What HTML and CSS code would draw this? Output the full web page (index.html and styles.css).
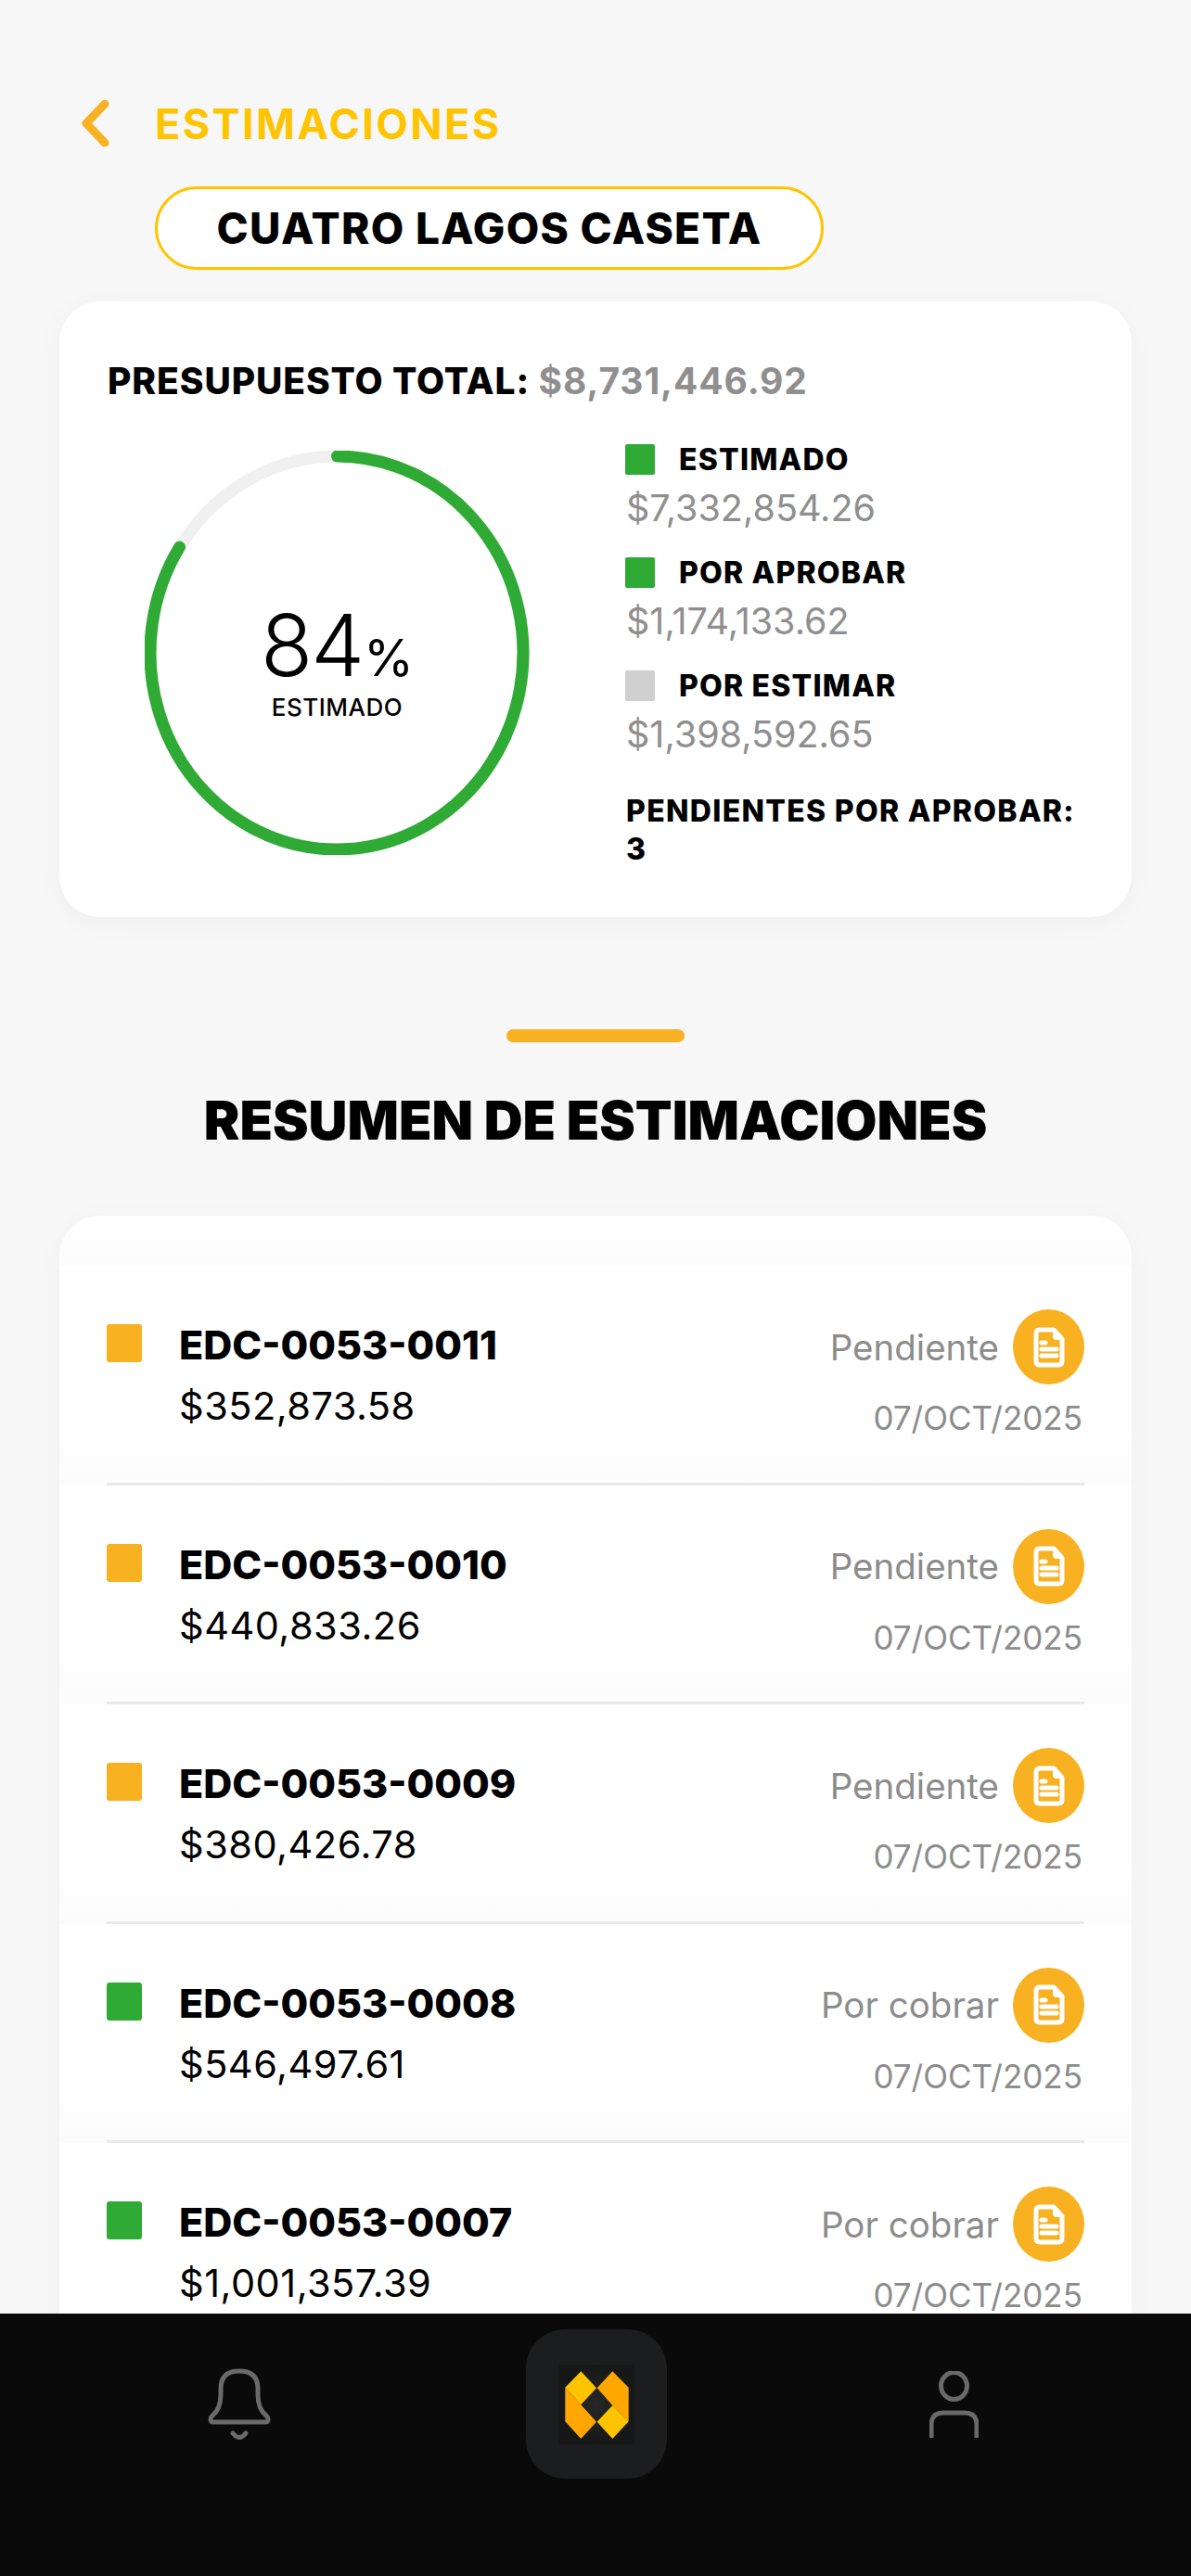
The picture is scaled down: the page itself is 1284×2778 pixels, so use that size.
FILE: index.html
```html
<!DOCTYPE html>
<html lang="es">
<head>
    <meta charset="UTF-8" />
    <meta name="viewport" content="width=device-width, initial-scale=1.0"/>
    <title>Estimaciones</title>
    <link rel="stylesheet" href="styles.css">
</head>
<body>

<div class="screen">
    <header class="top">
        <svg class="back" viewBox="0 0 30 50"><path d="M25 4 L5 25 L25 46" /></svg>
        <span class="top-title">ESTIMACIONES</span>
    </header>
    <div class="pill">CUATRO LAGOS CASETA</div>

    <section class="card budget">
        <div class="budget-total">PRESUPUESTO TOTAL: <span class="grey">$8,731,446.92</span></div>
        <div class="budget-body">
            <div class="donut">
                <svg viewBox="0 0 415 436">
                    <ellipse class="donut-track" cx="207.5" cy="218" rx="201" ry="212" />
                    <path class="donut-value" d="M207.5 6 A201 212 0 1 1 37.5 104" />
                </svg>
                <div class="donut-label">
                    <div class="donut-num">84<span class="donut-pct">%</span></div>
                    <div class="donut-sub">ESTIMADO</div>
                </div>
            </div>
            <div class="legend">
                <div class="legend-item">
                    <div class="legend-head"><i class="sq green"></i>ESTIMADO</div>
                    <div class="legend-amt">$7,332,854.26</div>
                </div>
                <div class="legend-item">
                    <div class="legend-head"><i class="sq green"></i>POR APROBAR</div>
                    <div class="legend-amt">$1,174,133.62</div>
                </div>
                <div class="legend-item">
                    <div class="legend-head"><i class="sq light"></i>POR ESTIMAR</div>
                    <div class="legend-amt">$1,398,592.65</div>
                </div>
                <div class="legend-pending">PENDIENTES POR APROBAR:<br>3</div>
            </div>
        </div>
    </section>

    <div class="divider-bar"></div>
    <h2 class="section-title">RESUMEN DE ESTIMACIONES</h2>

    <section class="card list">
        <div class="row">
            <div class="row-inner">
                <i class="row-sq orange"></i>
                <div class="row-main">
                    <div class="row-code">EDC-0053-0011</div>
                    <div class="row-amt">$352,873.58</div>
                </div>
                <div class="row-side">
                    <div class="row-status">Pendiente
                        <span class="doc"><svg viewBox="0 0 34 44"><path class="doc-line" d="M9 3 H22 L31 13 V37 Q31 41 27 41 H7 Q3 41 3 37 V7 Q3 3 7 3 Z" /><path class="doc-fold" d="M21 2 L32 14 H25 Q21 14 21 10 Z" /><path class="doc-line" d="M9 17 H13 M9 24 H25 M9 31 H25" /></svg></span>
                    </div>
                    <div class="row-date">07/OCT/2025</div>
                </div>
            </div>
        </div>
        <div class="row">
            <div class="row-inner">
                <i class="row-sq orange"></i>
                <div class="row-main">
                    <div class="row-code">EDC-0053-0010</div>
                    <div class="row-amt">$440,833.26</div>
                </div>
                <div class="row-side">
                    <div class="row-status">Pendiente
                        <span class="doc"><svg viewBox="0 0 34 44"><path class="doc-line" d="M9 3 H22 L31 13 V37 Q31 41 27 41 H7 Q3 41 3 37 V7 Q3 3 7 3 Z" /><path class="doc-fold" d="M21 2 L32 14 H25 Q21 14 21 10 Z" /><path class="doc-line" d="M9 17 H13 M9 24 H25 M9 31 H25" /></svg></span>
                    </div>
                    <div class="row-date">07/OCT/2025</div>
                </div>
            </div>
        </div>
        <div class="row">
            <div class="row-inner">
                <i class="row-sq orange"></i>
                <div class="row-main">
                    <div class="row-code">EDC-0053-0009</div>
                    <div class="row-amt">$380,426.78</div>
                </div>
                <div class="row-side">
                    <div class="row-status">Pendiente
                        <span class="doc"><svg viewBox="0 0 34 44"><path class="doc-line" d="M9 3 H22 L31 13 V37 Q31 41 27 41 H7 Q3 41 3 37 V7 Q3 3 7 3 Z" /><path class="doc-fold" d="M21 2 L32 14 H25 Q21 14 21 10 Z" /><path class="doc-line" d="M9 17 H13 M9 24 H25 M9 31 H25" /></svg></span>
                    </div>
                    <div class="row-date">07/OCT/2025</div>
                </div>
            </div>
        </div>
        <div class="row">
            <div class="row-inner">
                <i class="row-sq green"></i>
                <div class="row-main">
                    <div class="row-code">EDC-0053-0008</div>
                    <div class="row-amt">$546,497.61</div>
                </div>
                <div class="row-side">
                    <div class="row-status">Por cobrar
                        <span class="doc"><svg viewBox="0 0 34 44"><path class="doc-line" d="M9 3 H22 L31 13 V37 Q31 41 27 41 H7 Q3 41 3 37 V7 Q3 3 7 3 Z" /><path class="doc-fold" d="M21 2 L32 14 H25 Q21 14 21 10 Z" /><path class="doc-line" d="M9 17 H13 M9 24 H25 M9 31 H25" /></svg></span>
                    </div>
                    <div class="row-date">07/OCT/2025</div>
                </div>
            </div>
        </div>
        <div class="row">
            <div class="row-inner">
                <i class="row-sq green"></i>
                <div class="row-main">
                    <div class="row-code">EDC-0053-0007</div>
                    <div class="row-amt">$1,001,357.39</div>
                </div>
                <div class="row-side">
                    <div class="row-status">Por cobrar
                        <span class="doc"><svg viewBox="0 0 34 44"><path class="doc-line" d="M9 3 H22 L31 13 V37 Q31 41 27 41 H7 Q3 41 3 37 V7 Q3 3 7 3 Z" /><path class="doc-fold" d="M21 2 L32 14 H25 Q21 14 21 10 Z" /><path class="doc-line" d="M9 17 H13 M9 24 H25 M9 31 H25" /></svg></span>
                    </div>
                    <div class="row-date">07/OCT/2025</div>
                </div>
            </div>
        </div>
    </section>

    <nav class="tabbar">
        <svg class="tab-bell" viewBox="0 0 68 78">
            <path d="M3 55 Q3 53 5 51 Q14 44 14 28 V22 Q14 3 34 3 Q54 3 54 22 V28 Q54 44 63 51 Q65 53 65 55 Q65 58 62 58 H6 Q3 58 3 55 Z" />
            <path d="M27 70 Q34 79 41 70" />
        </svg>
        <div class="tab-logo">
            <svg viewBox="0 0 82 86">
                <defs>
                    <radialGradient id="logoBg">
                        <stop offset="0" stop-color="#262827" />
                        <stop offset="1" stop-color="#161817" />
                    </radialGradient>
                </defs>
                <rect width="82" height="86" fill="url(#logoBg)" />
                <path fill="#ffa600" d="M7.3 24.7 L24.3 43.3 L41 61.7 L24.3 80 L7.3 61.3 Z" />
                <path fill="#ffc400" d="M7.3 24.7 L24.3 7.3 L41 25.3 L24.3 43.3 Z" />
                <path fill="#ffa600" d="M41.7 25.3 L58.3 7.3 L75.7 24.7 V61.3 L58.3 44 Z" />
                <path fill="#ffc400" d="M75.7 61.3 L58.3 80 L41.7 61.7 L58.3 44 Z" />
            </svg>
        </div>
        <svg class="tab-user" viewBox="0 0 53 72">
            <ellipse cx="26.5" cy="16" rx="14" ry="14.5" />
            <path d="M2 71 V58 Q2 45 15 45 H38 Q51 45 51 58 V71" />
        </svg>
    </nav>
</div>

</body>
</html>
```

FILE: styles.css
```css
* { box-sizing: border-box; }
html, body { margin: 0; padding: 0; }
body {
    font-family: "Inter", "Liberation Sans", sans-serif;
    background: #f7f7f7;
    color: #000;
}
.screen {
    position: relative;
    width: 1284px;
    height: 2778px;
    overflow: hidden;
    padding: 106px 64px 0;
}

.top { display: flex; align-items: center; gap: 50px; height: 54px; padding-left: 24px; }
.back { width: 30px; height: 50px; fill: none; stroke: #f7b121; stroke-width: 9; stroke-linecap: round; stroke-linejoin: round; }
.top-title { color: #ffc400; font-size: 45px; font-weight: 700; letter-spacing: 2.4px; margin-left: -1px; }

.pill {
    width: 721px;
    height: 90px;
    margin: 41px 0 0 103px;
    display: flex;
    align-items: center;
    justify-content: center;
    background: #fff;
    border: 3px solid #ffc400;
    border-radius: 45px;
    font-size: 46px;
    font-weight: 800;
    letter-spacing: 1.3px;
}

.card {
    background: #fff;
    border-radius: 44px;
    box-shadow: 0 6px 30px rgba(0, 0, 0, .035);
}
.budget { height: 664px; margin-top: 34px; padding: 56px 52px 0; }
.budget-total { font-size: 39px; font-weight: 800; line-height: 60px; letter-spacing: .9px; white-space: nowrap; }
.grey { color: #8f8f8f; font-weight: 700; }
.budget-body { display: flex; margin-top: 45px; }

.donut { position: relative; width: 415px; height: 436px; margin-left: 40px; flex: none; }
.donut svg { display: block; width: 415px; height: 436px; fill: none; stroke-width: 13; }
.donut-track { stroke: #f0f0f0; }
.donut-value { stroke: #2eaa35; stroke-linecap: round; }
.donut-label { position: absolute; inset: 0; padding-top: 22px; display: flex; flex-direction: column; align-items: center; justify-content: center; }
.donut-num { font-size: 92px; font-weight: 300; line-height: 92px; letter-spacing: -2px; }
.donut-pct { font-size: 55px; font-weight: 400; margin-left: 1px; letter-spacing: 0; }
.donut-sub { font-size: 26px; font-weight: 500; line-height: 34px; margin-top: -9px; letter-spacing: .5px; }

.legend { margin: -7px 0 0 103px; }
.legend-item { height: 122px; }
.legend-head { display: flex; align-items: center; gap: 26px; height: 33px; font-size: 32px; font-weight: 800; letter-spacing: 1.2px; }
.sq { display: block; width: 32px; height: 33px; border-radius: 2px; }
.green { background: #2eaa35; }
.light { background: #d0d0d0; }
.legend-amt { font-size: 39.5px; line-height: 54px; margin: 9px 0 0 1px; color: #8f8f8f; }
.legend-pending { font-size: 32px; font-weight: 800; line-height: 41px; margin: 9px 0 0 1px; letter-spacing: 1.3px; white-space: nowrap; }

.divider-bar { width: 192px; height: 14px; margin: 121px auto 0; background: #f7b121; border-radius: 7px; }
.section-title { margin: 44px 0 0; font-size: 58px; font-weight: 900; line-height: 80px; text-align: center; }

.list {
    margin-top: 63px;
    padding-top: 54px;
    height: 1500px;
    background: linear-gradient(#fff 0, #fcfcfc 54px, #fff 54px);
}
.row { height: 236.5px; padding: 0 51px; background: linear-gradient(#fff 70%, #fcfcfc); }
.row-inner { display: flex; height: 100%; padding-top: 47px; border-bottom: 3px solid #e9e9e9; }
.row-sq { display: block; width: 38px; height: 41px; margin-top: 16px; border-radius: 3px; flex: none; }
.row-sq.orange { background: #f7b121; }
.row-sq.green { background: #2eaa35; }
.row-main { margin: 5px 0 0 40px; flex: 1; }
.row-code { font-size: 43px; font-weight: 800; line-height: 66px; }
.row-amt { font-size: 41.5px; line-height: 66px; letter-spacing: .5px; }
.row-side { text-align: right; }
.row-status { display: flex; align-items: center; justify-content: flex-end; gap: 15px; font-size: 38.5px; color: #8c8c8c; }
.doc { width: 77px; height: 81px; display: flex; align-items: center; justify-content: center; background: #f7b121; border-radius: 50%; }
.doc svg { width: 34px; height: 44px; }
.doc-line { fill: none; stroke: #fff; stroke-width: 5; stroke-linecap: round; stroke-linejoin: round; }
.doc-fold { fill: #fff; }
.row-date { margin-top: 14px; padding-right: 2px; font-size: 35px; line-height: 44px; color: #8c8c8c; }

.tabbar {
    position: absolute;
    left: 0;
    right: 0;
    bottom: 0;
    height: 283px;
    background: #0a0a0a;
}
.tab-bell, .tab-user { position: absolute; fill: none; stroke: #6a6a6a; stroke-width: 5; stroke-linecap: round; stroke-linejoin: round; }
.tab-bell { left: 224px; top: 59px; width: 68px; height: 78px; }
.tab-user { left: 1002px; top: 62px; width: 53px; height: 72px; }
.tab-logo {
    position: absolute;
    left: 567px;
    top: 17px;
    width: 152px;
    height: 161px;
    display: flex;
    align-items: center;
    justify-content: center;
    background: #1c1d1e;
    border-radius: 42px;
}
.tab-logo svg { width: 82px; height: 86px; display: block; }
```
